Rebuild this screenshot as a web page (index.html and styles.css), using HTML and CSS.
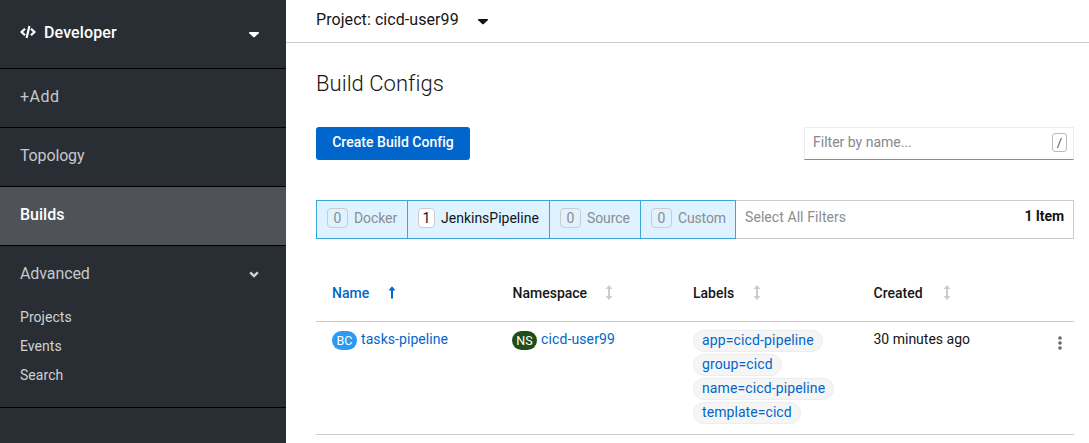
FILE: index.html
```html
<!DOCTYPE html>
<html lang="en">
<head>
<meta charset="utf-8">
<title>Build Configs</title>
<link rel="stylesheet" href="styles.css">
</head>
<body>
<div class="page">
  <aside class="sidebar">
    <div class="perspective">
      <svg class="code-icon" viewBox="0 0 16 14"><path d="M5 3.8 1.6 7 5 10.2M11 3.8 14.4 7 11 10.2M9.4 1 6.6 13"/></svg>
      <span class="perspective-name">Developer</span>
      <svg class="caret" viewBox="0 0 10 6"><path d="M.6 0h8.8q1 .3.3 1.2L5.8 5q-.8.7-1.6 0L.3 1.2Q-.4.3.6 0z"/></svg>
    </div>
    <nav>
      <a class="nav-item add">+Add</a>
      <a class="nav-item topology">Topology</a>
      <a class="nav-item active">Builds</a>
      <div class="nav-group">
        <a class="nav-head"><span>Advanced</span><svg class="chevron" viewBox="0 0 10 7"><path d="M1.2 1.3 5 5.1l3.8-3.8"/></svg></a>
        <a class="sub projects">Projects</a>
        <a class="sub">Events</a>
        <a class="sub">Search</a>
      </div>
    </nav>
  </aside>
  <main class="main">
    <header class="project-bar">
      <span>Project: cicd-user99</span>
      <svg class="caret" viewBox="0 0 10 6"><path d="M.6 0h8.8q1 .3.3 1.2L5.8 5q-.8.7-1.6 0L.3 1.2Q-.4.3.6 0z"/></svg>
    </header>
    <section class="content">
      <h1>Build Configs</h1>
      <div class="toolbar">
        <button class="create">Create Build Config</button>
        <div class="search"><span>Filter by name...</span><kbd>/</kbd></div>
      </div>
      <div class="filters">
        <div class="filter docker"><b>0</b><span>Docker</span></div>
        <div class="filter jenkins on"><b>1</b><span>JenkinsPipeline</span></div>
        <div class="filter source"><b>0</b><span>Source</span></div>
        <div class="filter custom"><b>0</b><span>Custom</span></div>
        <div class="summary"><span class="select-all">Select All Filters</span><span class="count">1 Item</span></div>
      </div>
      <div class="row head">
        <div class="th sorted"><span>Name</span><svg class="up" viewBox="0 0 8 13"><path d="M4 12.5V2"/><path class="tip" d="M4 .3 7.5 4.6H.5z"/></svg></div>
        <div class="th ns"><span>Namespace</span><svg class="both" viewBox="0 0 8 15"><path class="shaft" d="M4 3v9"/><path d="M4 0l3.4 4H.6zM4 15l3.4-4H.6z"/></svg></div>
        <div class="th"><span>Labels</span><svg class="both" viewBox="0 0 8 15"><path class="shaft" d="M4 3v9"/><path d="M4 0l3.4 4H.6zM4 15l3.4-4H.6z"/></svg></div>
        <div class="th made"><span>Created</span><svg class="both" viewBox="0 0 8 15"><path class="shaft" d="M4 3v9"/><path d="M4 0l3.4 4H.6zM4 15l3.4-4H.6z"/></svg></div>
      </div>
      <div class="row body">
        <div class="res"><i class="badge bc">BC</i><a class="tasks">tasks-pipeline</a></div>
        <div class="res"><i class="badge nsb">NS</i><a class="user">cicd-user99</a></div>
        <div class="labels">
          <a class="app">app=cicd-pipeline</a>
          <a class="group">group=cicd</a>
          <a class="name">name=cicd-pipeline</a>
          <a class="template">template=cicd</a>
        </div>
        <div class="created">30 minutes ago</div>
        <svg class="kebab" viewBox="0 0 4 14"><circle cx="2" cy="2" r="1.8"/><circle cx="2" cy="7" r="1.8"/><circle cx="2" cy="12" r="1.8"/></svg>
      </div>
    </section>
  </main>
</div>
</body>
</html>
```
FILE: styles.css
```css
* { box-sizing: border-box; }
body { margin: 0; background: #fff; color: #151515; font: 14px/20px Roboto, sans-serif; overflow: hidden; }
svg { display: block; flex: none; }
.page { display: flex; height: 443px; }

.sidebar { width: 286px; flex: none; background: #292e34; color: #d1d1d1; font-size: 16px; }
.perspective { display: flex; height: 69px; padding: 0 27px 3px 20px; align-items: center; border-bottom: 1px solid #000; color: #fff; }
.code-icon { width: 16px; height: 14px; margin-top: -1px; fill: none; stroke: #fff; stroke-width: 2.2; }
.perspective-name { margin-left: 8px; font-weight: 500; letter-spacing: .12px; }
.caret { width: 10px; height: 6px; fill: currentColor; }
.perspective .caret { margin: 4px 0 0 auto; }
.nav-item { display: flex; height: 59px; padding: 0 20px 3px; align-items: center; border-bottom: 1px solid #000; color: #c6c8ca; }
.nav-item.add { letter-spacing: .5px; }
.nav-item.topology { letter-spacing: -.15px; }
.nav-item.active { background: #4f5258; color: #fff; font-weight: 500; }
.nav-group { height: 162px; border-bottom: 1px solid #000; }
.nav-head { display: flex; height: 57px; padding: 0 27px 1px 20px; align-items: center; justify-content: space-between; color: #c6c8ca; letter-spacing: -.1px; }
.chevron { width: 10px; height: 7px; fill: none; stroke: #d1d1d1; stroke-width: 2.5; }
.sub { display: block; height: 29px; padding-left: 20px; font-size: 14px; line-height: 29px; letter-spacing: .05px; }

.main { flex: 1; min-width: 0; }
.project-bar { display: flex; height: 43px; padding: 0 30px 3px; align-items: center; border-bottom: 1px solid #ccc; font-size: 16px; }
.project-bar span { letter-spacing: .07px; }
.project-bar .caret { margin: 4px 0 0 19px; }
.content { padding: 0 15px 0 30px; }
h1 { margin: 26px 0 0; font-size: 22px; line-height: 30px; font-weight: 300; letter-spacing: .04px; }
.toolbar { display: flex; margin-top: 28px; height: 33px; justify-content: space-between; }
.create { width: 154px; padding: 0 0 3px; border: 0; border-radius: 3px; background: #06c; color: #fff; font: 500 14px/20px Roboto, sans-serif; letter-spacing: .03px; }
.search { display: flex; width: 270px; padding: 0 6px 1px 8px; align-items: center; justify-content: space-between; border: 1px solid #ededed; border-bottom-color: #8a8d90; color: #888; }
.search span { padding-bottom: 2px; }
kbd { width: 15px; height: 19px; margin-top: -1px; border: 1px solid #bbb; border-radius: 3px; color: #555; font: 13px/17px Roboto, sans-serif; text-align: center; }

.filters { display: flex; height: 39px; margin-top: 40px; border: 1px solid #ccc; border-left: 0; }
.filter { display: flex; margin: -1px 0 -1px -1px; padding: 0 0 3px 10px; align-items: center; border: 1px solid #39a5dc; background: #def3ff; color: #8b8d8f; }
.filter b { width: 21px; height: 20px; margin-right: 6px; border: 1px solid #ccc; border-radius: 4px; font-weight: 400; line-height: 18px; text-align: center; }
.filter.on { color: #151515; }
.filter.on b { width: 17px; background: #fff; }
.docker { width: 92px; margin-left: 0; }
.docker span { letter-spacing: -.1px; }
.jenkins { width: 143px; }
.source { width: 92px; }
.source span { letter-spacing: -.1px; }
.custom { width: 96px; }
.custom span { letter-spacing: -.15px; }
.summary { display: flex; flex: 1; padding: 0 9px 5px; align-items: center; justify-content: space-between; }
.select-all { color: #8b8d8f; letter-spacing: .07px; }
.count { font-weight: 700; margin-top: -2px; letter-spacing: -.1px; }

.row { display: grid; grid-template-columns: 180.5px 180.5px 180.5px 1fr auto; padding: 0 12px 0 16px; border-bottom: 1px solid #ccc; }
.head { height: 83px; align-items: end; padding-bottom: 18px; }
.th { display: flex; align-items: center; font-weight: 500; }
.sorted { color: #06c; }
.up { width: 8px; height: 13px; margin: -2px 0 0 19px; fill: none; stroke: currentColor; stroke-width: 2; }
.tip { fill: currentColor; stroke: none; }
.both { width: 8px; height: 15px; margin: -2px 0 0 19px; fill: #ccc; }
.ns .both { margin-left: 18px; }
.made .both { margin-left: 20px; }
.shaft { stroke: #ccc; stroke-width: 2; }
.body { height: 113px; padding-top: 8px; }
.res { display: flex; height: 18px; align-items: center; }
.created { line-height: 18px; }
.body a { color: #06c; }
.tasks { letter-spacing: .07px; }
.user { letter-spacing: .12px; }
.badge { width: 25px; height: 19px; margin: 2px 4px 0 0; border-radius: 10px; color: #fff; font-size: 12.5px; line-height: 19px; font-style: normal; text-align: center; }
.bc { background: #2b9af3; }
.nsb { margin-left: -.5px; background: #1e4f18; }
.labels { display: flex; flex-direction: column; align-items: flex-start; gap: 2px; }
.labels a { height: 22px; padding: 0 8px; border: 1px solid #ededed; border-radius: 11px; background: #f5f5f5; line-height: 19px; }
.labels .app { letter-spacing: .14px; }
.labels .group { letter-spacing: .1px; }
.labels .name { letter-spacing: .12px; }
.labels .template { letter-spacing: .07px; }
.kebab { width: 4px; height: 14px; margin-top: 6px; fill: #666; }
```
